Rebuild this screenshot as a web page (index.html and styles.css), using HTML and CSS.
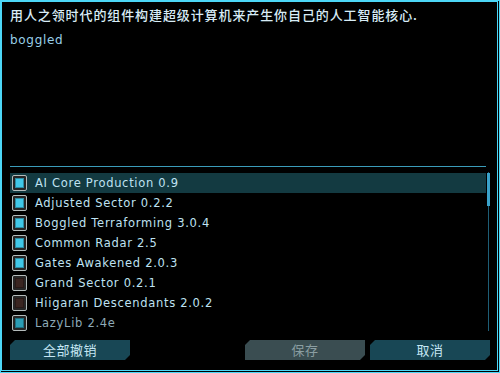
FILE: index.html
```html
<!DOCTYPE html>
<html lang="zh">
<head>
    <meta charset="UTF-8">
    <title>Mod Profile</title>
    <link rel="stylesheet" href="styles.css">
</head>
<body>
<div class="frame">
    <div class="header">
        <div class="desc">用人之领时代的组件构建超级计算机来产生你自己的人工智能核心.</div>
        <div class="author">boggled</div>
    </div>
    <div class="rule"></div>
    <div class="list-area">
        <ul class="mod-list">
            <li class="mod selected"><span class="box on"><span></span></span>AI Core Production 0.9</li>
            <li class="mod"><span class="box on"><span></span></span>Adjusted Sector 0.2.2</li>
            <li class="mod"><span class="box on"><span></span></span>Boggled Terraforming 3.0.4</li>
            <li class="mod"><span class="box on"><span></span></span>Common Radar 2.5</li>
            <li class="mod"><span class="box on"><span></span></span>Gates Awakened 2.0.3</li>
            <li class="mod"><span class="box off"><span></span></span>Grand Sector 0.2.1</li>
            <li class="mod"><span class="box off"><span></span></span>Hiigaran Descendants 2.0.2</li>
            <li class="mod locked"><span class="box on"><span></span></span>LazyLib 2.4e</li>
        </ul>
        <div class="scrollbar">
            <div class="thumb"></div>
        </div>
    </div>
    <div class="buttons">
        <button class="btn">全部撤销</button>
        <button class="btn disabled push">保存</button>
        <button class="btn">取消</button>
    </div>
</div>
</body>
</html>
```

FILE: styles.css
```css
/* General styles */
body {
    margin: 0;
    background-color: #000;
    font-family: 'DejaVu Sans', 'Noto Sans CJK SC', sans-serif;
}

/* Window frame */
.frame {
    width: 500px;
    height: 373px;
    box-sizing: border-box;
    display: flex;
    flex-direction: column;
    border-top: 2px solid #4cd6f6;
    border-left: 2px solid #4cd6f6;
    border-right: 3px double #4cd6f6;
    border-bottom: 3px double #4cd6f6;
    padding: 0 7px 10px 8px;
}

.header {
    height: 164px;
    font-family: 'Noto Sans CJK SC', sans-serif;
}

.desc {
    margin-top: 3px;
    font-size: 13px;
    font-weight: 500;
    letter-spacing: 0.9px;
    line-height: 20px;
    color: #d8ecf6;
}

.author {
    margin-top: 5px;
    font-family: 'DejaVu Sans', sans-serif;
    font-size: 12px;
    letter-spacing: 0.7px;
    line-height: 20px;
    color: #98cfe8;
}

.rule {
    height: 1px;
    margin-right: 4px;
    background-color: #3b9cba;
}

/* Mod list */
.list-area {
    display: flex;
    margin-top: 6px;
    height: 160px;
}

.mod-list {
    list-style: none;
    margin: 0;
    padding: 0;
    flex: 1;
}

.mod {
    display: flex;
    align-items: center;
    height: 20px;
    font-size: 11.5px;
    letter-spacing: 0.7px;
    color: #bfe2f2;
}

.mod.selected {
    background-color: #133a41;
}

.mod.locked {
    color: #8eabb8;
}

.box {
    width: 15px;
    height: 16px;
    box-sizing: border-box;
    margin: 0 8px 0 2px;
    padding: 2px;
    border: 1px solid #b4bcbc;
    border-radius: 2px;
    background-color: #262626;
    display: flex;
}

.box span {
    flex: 1;
    box-shadow: inset 0 0 0 1px rgba(0, 0, 0, 0.3);
}

.box.on span {
    background-color: #40c8e8;
}

.box.off span {
    background-color: #3a2521;
}

.locked .box span {
    background-color: #2b9db5;
}

.scrollbar {
    width: 4px;
    margin-top: -1px;
    height: 159px;
    background: linear-gradient(to right, transparent 2px, #1e5e76 2px, #1e5e76 3px, transparent 3px);
}

.thumb {
    width: 3px;
    height: 33px;
    margin: 1px 0 0 1px;
    background-color: #3aa2ca;
}

/* Buttons */
.buttons {
    display: flex;
    gap: 5px;
    margin-top: 7px;
}

.btn {
    width: 120px;
    height: 20px;
    padding: 0;
    border: none;
    background-color: #184755;
    color: #c6e6f4;
    font-family: 'Noto Sans CJK SC', sans-serif;
    font-size: 13px;
    letter-spacing: 0.5px;
    line-height: 20px;
    clip-path: polygon(5px 0, 100% 0, 100% calc(100% - 5px), calc(100% - 5px) 100%, 0 100%, 0 5px);
}

.btn.disabled {
    background-color: #3a4d51;
    color: #8a9ea2;
}

.push {
    margin-left: auto;
}
```
